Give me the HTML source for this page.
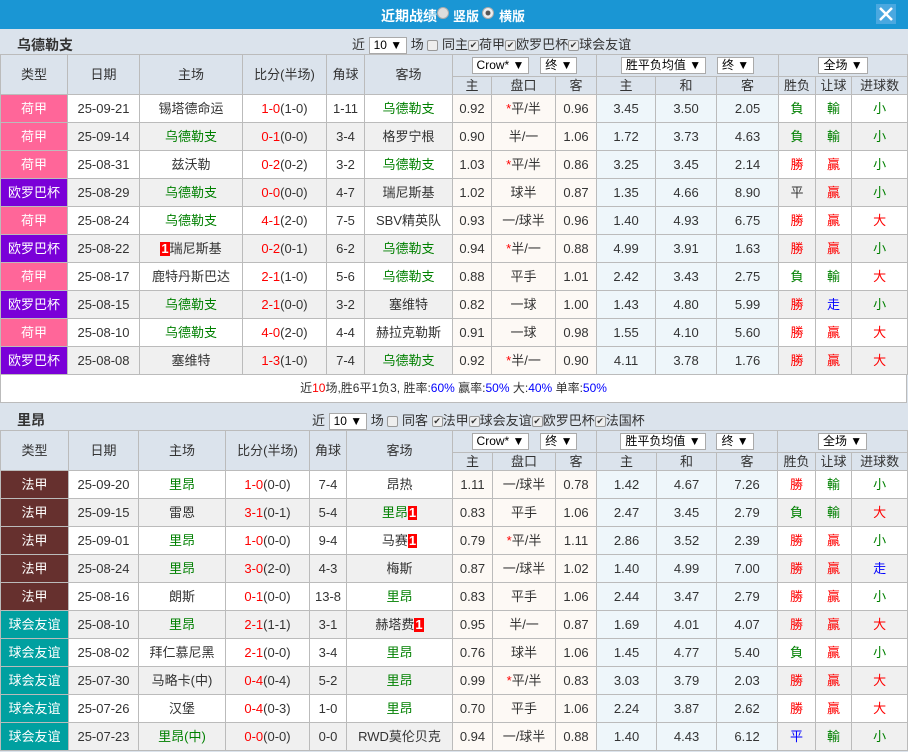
<!DOCTYPE html>
<html><head><meta charset="utf-8">
<style>
*{margin:0;padding:0;box-sizing:border-box}
body{width:908px;height:752px;overflow:hidden;background:#dbe3ec;font-family:"Liberation Sans","Noto Sans CJK SC",sans-serif;font-size:13px;color:#333}
.top{height:29px;background:#1a96d4;color:#fff;position:relative}
.top .t{position:absolute;left:381px;top:6px;font-size:14px;font-weight:bold}
.top .r{position:absolute;top:7px;width:12px;height:12px;border-radius:50%;background:#ddd;border:1px solid #aaa}
.top .r.on{background:radial-gradient(#555 30%,#eee 40%)}
.top .s{position:absolute;top:6px;font-size:13px;font-weight:bold}
.close{position:absolute;left:876px;top:4px;width:20px;height:20px;background:#4aa8e0}
.bar{height:25px;position:relative}
.bar b{position:absolute;left:17px;top:6px;font-size:14px}
.ctl{position:absolute;top:5px;font-size:13px;white-space:nowrap}
.sel{display:inline-block;background:#fff;border:1px solid #aaa;padding:0 4px;height:17px;line-height:15px;vertical-align:middle;font-size:12px;color:#000}
.cb{display:inline-block;width:11px;height:11px;border:1px solid #999;border-radius:2px;background:#eee;vertical-align:middle;font-size:9px;line-height:9px;text-align:center;color:#333}
table{border-collapse:collapse;table-layout:fixed;width:907px}
td,th{border:1px solid #bbb;text-align:center;font-weight:normal;white-space:nowrap;overflow:hidden;padding:0;background:#fff;line-height:16px}
thead td{background:#dbe3ec}
tr.h1{height:22px} tr.h2{height:18px}
tr.h2 td{line-height:15px}
tbody tr{height:28px}
tbody tr:nth-child(even) td{background:#f0f0f0}
tbody td.o{background:#fdf9f5!important}
tbody td.e{background:#eef6fa!important}
tbody td.ty{color:#fff!important}
.hj{background:#ff6699!important}.oz{background:#7a00d8!important}.fj{background:#66302e!important}.yy{background:#00a0a0!important}
.g{color:#008000}.r{color:#f00}.b{color:#00f}
.rc{display:inline-block;background:#f00;color:#fff;font-weight:bold;padding:0 1px;line-height:14px}
.sum{height:28px;background:#fff;text-align:center;line-height:27px;font-size:12px;border:1px solid #bbb;border-top:0;width:907px}
</style></head><body>
<div class="top"><span class="t">近期战绩</span><span class="r" style="left:437px"></span><span class="s" style="left:453px">竖版</span><span class="r on" style="left:482px"></span><span class="s" style="left:499px">横版</span>
<div class="close"><svg width="20" height="20"><path d="M4 4L16 16M16 4L4 16" stroke="#fff" stroke-width="2.5"/></svg></div></div>
<div class="bar"><b>乌德勒支</b><div class="ctl" style="left:352px">近 <span class="sel">10 ▼</span> 场 <span class="cb"></span> 同主<span class="cb">✔</span>荷甲<span class="cb">✔</span>欧罗巴杯<span class="cb">✔</span>球会友谊</div></div>
<table>
<colgroup><col style="width:67px"><col style="width:72px"><col style="width:103px"><col style="width:84px"><col style="width:38px"><col style="width:88px"><col style="width:39px"><col style="width:64px"><col style="width:41px"><col style="width:59px"><col style="width:61px"><col style="width:62px"><col style="width:37px"><col style="width:36px"><col style="width:56px"></colgroup>
<thead><tr class="h1"><td rowspan="2">类型</td><td rowspan="2">日期</td><td rowspan="2">主场</td><td rowspan="2">比分(半场)</td><td rowspan="2">角球</td><td rowspan="2">客场</td><td colspan="3"><span class="sel">Crow* ▼</span> &nbsp; <span class="sel">终 ▼</span></td><td colspan="3"><span class="sel">胜平负均值 ▼</span> &nbsp; <span class="sel">终 ▼</span></td><td colspan="3"><span class="sel">全场 ▼</span></td></tr>
<tr class="h2"><td>主</td><td>盘口</td><td>客</td><td>主</td><td>和</td><td>客</td><td>胜负</td><td>让球</td><td>进球数</td></tr></thead>
<tbody>
<tr><td class="ty hj">荷甲</td><td>25-09-21</td><td>锡塔德命运</td><td><span class="r">1-0</span>(1-0)</td><td>1-11</td><td class="g">乌德勒支</td><td class="o">0.92</td><td class="o"><span class="r">*</span>平/半</td><td class="o">0.96</td><td class="e">3.45</td><td class="e">3.50</td><td class="e">2.05</td><td class="g">負</td><td class="g">輸</td><td class="g">小</td></tr>
<tr><td class="ty hj">荷甲</td><td>25-09-14</td><td class="g">乌德勒支</td><td><span class="r">0-1</span>(0-0)</td><td>3-4</td><td>格罗宁根</td><td class="o">0.90</td><td class="o">半/一</td><td class="o">1.06</td><td class="e">1.72</td><td class="e">3.73</td><td class="e">4.63</td><td class="g">負</td><td class="g">輸</td><td class="g">小</td></tr>
<tr><td class="ty hj">荷甲</td><td>25-08-31</td><td>兹沃勒</td><td><span class="r">0-2</span>(0-2)</td><td>3-2</td><td class="g">乌德勒支</td><td class="o">1.03</td><td class="o"><span class="r">*</span>平/半</td><td class="o">0.86</td><td class="e">3.25</td><td class="e">3.45</td><td class="e">2.14</td><td class="r">勝</td><td class="r">贏</td><td class="g">小</td></tr>
<tr><td class="ty oz">欧罗巴杯</td><td>25-08-29</td><td class="g">乌德勒支</td><td><span class="r">0-0</span>(0-0)</td><td>4-7</td><td>瑞尼斯基</td><td class="o">1.02</td><td class="o">球半</td><td class="o">0.87</td><td class="e">1.35</td><td class="e">4.66</td><td class="e">8.90</td><td>平</td><td class="r">贏</td><td class="g">小</td></tr>
<tr><td class="ty hj">荷甲</td><td>25-08-24</td><td class="g">乌德勒支</td><td><span class="r">4-1</span>(2-0)</td><td>7-5</td><td>SBV精英队</td><td class="o">0.93</td><td class="o">一/球半</td><td class="o">0.96</td><td class="e">1.40</td><td class="e">4.93</td><td class="e">6.75</td><td class="r">勝</td><td class="r">贏</td><td class="r">大</td></tr>
<tr><td class="ty oz">欧罗巴杯</td><td>25-08-22</td><td><span class="rc">1</span>瑞尼斯基</td><td><span class="r">0-2</span>(0-1)</td><td>6-2</td><td class="g">乌德勒支</td><td class="o">0.94</td><td class="o"><span class="r">*</span>半/一</td><td class="o">0.88</td><td class="e">4.99</td><td class="e">3.91</td><td class="e">1.63</td><td class="r">勝</td><td class="r">贏</td><td class="g">小</td></tr>
<tr><td class="ty hj">荷甲</td><td>25-08-17</td><td>鹿特丹斯巴达</td><td><span class="r">2-1</span>(1-0)</td><td>5-6</td><td class="g">乌德勒支</td><td class="o">0.88</td><td class="o">平手</td><td class="o">1.01</td><td class="e">2.42</td><td class="e">3.43</td><td class="e">2.75</td><td class="g">負</td><td class="g">輸</td><td class="r">大</td></tr>
<tr><td class="ty oz">欧罗巴杯</td><td>25-08-15</td><td class="g">乌德勒支</td><td><span class="r">2-1</span>(0-0)</td><td>3-2</td><td>塞维特</td><td class="o">0.82</td><td class="o">一球</td><td class="o">1.00</td><td class="e">1.43</td><td class="e">4.80</td><td class="e">5.99</td><td class="r">勝</td><td class="b">走</td><td class="g">小</td></tr>
<tr><td class="ty hj">荷甲</td><td>25-08-10</td><td class="g">乌德勒支</td><td><span class="r">4-0</span>(2-0)</td><td>4-4</td><td>赫拉克勒斯</td><td class="o">0.91</td><td class="o">一球</td><td class="o">0.98</td><td class="e">1.55</td><td class="e">4.10</td><td class="e">5.60</td><td class="r">勝</td><td class="r">贏</td><td class="r">大</td></tr>
<tr><td class="ty oz">欧罗巴杯</td><td>25-08-08</td><td>塞维特</td><td><span class="r">1-3</span>(1-0)</td><td>7-4</td><td class="g">乌德勒支</td><td class="o">0.92</td><td class="o"><span class="r">*</span>半/一</td><td class="o">0.90</td><td class="e">4.11</td><td class="e">3.78</td><td class="e">1.76</td><td class="r">勝</td><td class="r">贏</td><td class="r">大</td></tr>
</tbody></table>
<div class="sum">近<span class="r">10</span>场,胜6平1负3, 胜率:<span class="b">60%</span> 赢率:<span class="b">50%</span> 大:<span class="b">40%</span> 单率:<span class="b">50%</span></div>
<div class="bar" style="height:27px"><b style="top:7px">里昂</b><div class="ctl" style="left:312px;top:7px">近 <span class="sel">10 ▼</span> 场 <span class="cb"></span> 同客 <span class="cb">✔</span>法甲<span class="cb">✔</span>球会友谊<span class="cb">✔</span>欧罗巴杯<span class="cb">✔</span>法国杯</div></div>
<table>
<colgroup><col style="width:68px"><col style="width:70px"><col style="width:87px"><col style="width:84px"><col style="width:37px"><col style="width:106px"><col style="width:40px"><col style="width:63px"><col style="width:41px"><col style="width:60px"><col style="width:60px"><col style="width:61px"><col style="width:38px"><col style="width:36px"><col style="width:56px"></colgroup>
<thead><tr class="h1"><td rowspan="2">类型</td><td rowspan="2">日期</td><td rowspan="2">主场</td><td rowspan="2">比分(半场)</td><td rowspan="2">角球</td><td rowspan="2">客场</td><td colspan="3"><span class="sel">Crow* ▼</span> &nbsp; <span class="sel">终 ▼</span></td><td colspan="3"><span class="sel">胜平负均值 ▼</span> &nbsp; <span class="sel">终 ▼</span></td><td colspan="3"><span class="sel">全场 ▼</span></td></tr>
<tr class="h2"><td>主</td><td>盘口</td><td>客</td><td>主</td><td>和</td><td>客</td><td>胜负</td><td>让球</td><td>进球数</td></tr></thead>
<tbody>
<tr><td class="ty fj">法甲</td><td>25-09-20</td><td class="g">里昂</td><td><span class="r">1-0</span>(0-0)</td><td>7-4</td><td>昂热</td><td class="o">1.11</td><td class="o">一/球半</td><td class="o">0.78</td><td class="e">1.42</td><td class="e">4.67</td><td class="e">7.26</td><td class="r">勝</td><td class="g">輸</td><td class="g">小</td></tr>
<tr><td class="ty fj">法甲</td><td>25-09-15</td><td>雷恩</td><td><span class="r">3-1</span>(0-1)</td><td>5-4</td><td class="g">里昂<span class="rc">1</span></td><td class="o">0.83</td><td class="o">平手</td><td class="o">1.06</td><td class="e">2.47</td><td class="e">3.45</td><td class="e">2.79</td><td class="g">負</td><td class="g">輸</td><td class="r">大</td></tr>
<tr><td class="ty fj">法甲</td><td>25-09-01</td><td class="g">里昂</td><td><span class="r">1-0</span>(0-0)</td><td>9-4</td><td>马赛<span class="rc">1</span></td><td class="o">0.79</td><td class="o"><span class="r">*</span>平/半</td><td class="o">1.11</td><td class="e">2.86</td><td class="e">3.52</td><td class="e">2.39</td><td class="r">勝</td><td class="r">贏</td><td class="g">小</td></tr>
<tr><td class="ty fj">法甲</td><td>25-08-24</td><td class="g">里昂</td><td><span class="r">3-0</span>(2-0)</td><td>4-3</td><td>梅斯</td><td class="o">0.87</td><td class="o">一/球半</td><td class="o">1.02</td><td class="e">1.40</td><td class="e">4.99</td><td class="e">7.00</td><td class="r">勝</td><td class="r">贏</td><td class="b">走</td></tr>
<tr><td class="ty fj">法甲</td><td>25-08-16</td><td>朗斯</td><td><span class="r">0-1</span>(0-0)</td><td>13-8</td><td class="g">里昂</td><td class="o">0.83</td><td class="o">平手</td><td class="o">1.06</td><td class="e">2.44</td><td class="e">3.47</td><td class="e">2.79</td><td class="r">勝</td><td class="r">贏</td><td class="g">小</td></tr>
<tr><td class="ty yy">球会友谊</td><td>25-08-10</td><td class="g">里昂</td><td><span class="r">2-1</span>(1-1)</td><td>3-1</td><td>赫塔费<span class="rc">1</span></td><td class="o">0.95</td><td class="o">半/一</td><td class="o">0.87</td><td class="e">1.69</td><td class="e">4.01</td><td class="e">4.07</td><td class="r">勝</td><td class="r">贏</td><td class="r">大</td></tr>
<tr><td class="ty yy">球会友谊</td><td>25-08-02</td><td>拜仁慕尼黑</td><td><span class="r">2-1</span>(0-0)</td><td>3-4</td><td class="g">里昂</td><td class="o">0.76</td><td class="o">球半</td><td class="o">1.06</td><td class="e">1.45</td><td class="e">4.77</td><td class="e">5.40</td><td class="g">負</td><td class="r">贏</td><td class="g">小</td></tr>
<tr><td class="ty yy">球会友谊</td><td>25-07-30</td><td>马略卡(中)</td><td><span class="r">0-4</span>(0-4)</td><td>5-2</td><td class="g">里昂</td><td class="o">0.99</td><td class="o"><span class="r">*</span>平/半</td><td class="o">0.83</td><td class="e">3.03</td><td class="e">3.79</td><td class="e">2.03</td><td class="r">勝</td><td class="r">贏</td><td class="r">大</td></tr>
<tr><td class="ty yy">球会友谊</td><td>25-07-26</td><td>汉堡</td><td><span class="r">0-4</span>(0-3)</td><td>1-0</td><td class="g">里昂</td><td class="o">0.70</td><td class="o">平手</td><td class="o">1.06</td><td class="e">2.24</td><td class="e">3.87</td><td class="e">2.62</td><td class="r">勝</td><td class="r">贏</td><td class="r">大</td></tr>
<tr><td class="ty yy">球会友谊</td><td>25-07-23</td><td class="g">里昂(中)</td><td><span class="r">0-0</span>(0-0)</td><td>0-0</td><td>RWD莫伦贝克</td><td class="o">0.94</td><td class="o">一/球半</td><td class="o">0.88</td><td class="e">1.40</td><td class="e">4.43</td><td class="e">6.12</td><td class="b">平</td><td class="g">輸</td><td class="g">小</td></tr>
</tbody></table>
</body></html>
